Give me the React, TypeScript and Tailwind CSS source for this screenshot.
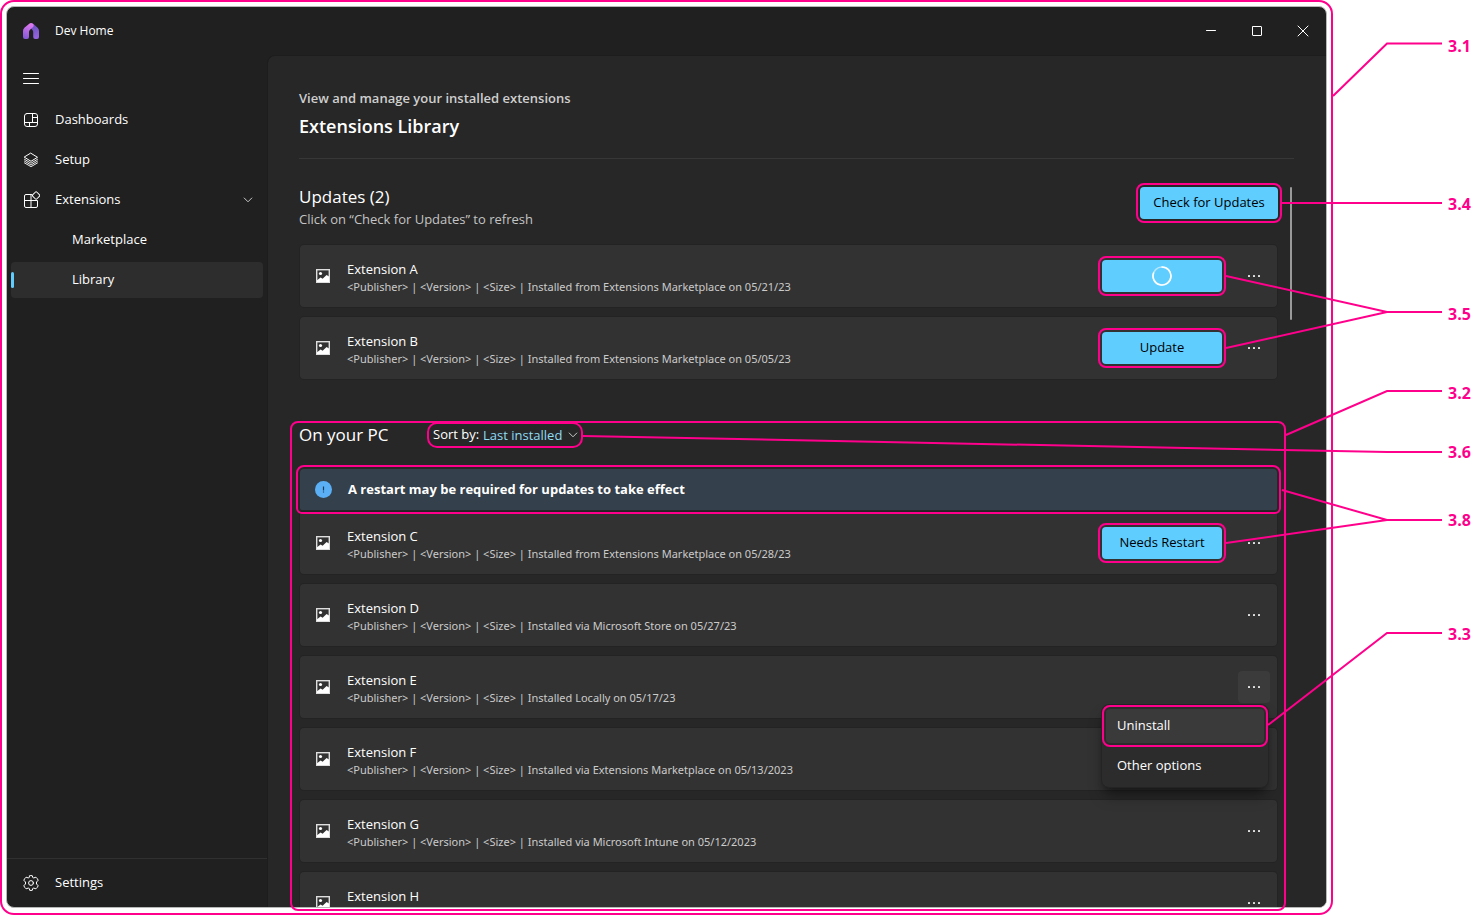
import type { ReactNode } from "react";

type Extension = {
  name: string;
  source?: string;
  action?: "loading" | "Update" | "Needs Restart";
  menuOpen?: boolean;
};

const updates: Extension[] = [
  { name: "Extension A", source: "Installed from Extensions Marketplace on 05/21/23", action: "loading" },
  { name: "Extension B", source: "Installed from Extensions Marketplace on 05/05/23", action: "Update" },
];

const restartPending: Extension = {
  name: "Extension C",
  source: "Installed from Extensions Marketplace on 05/28/23",
  action: "Needs Restart",
};

const installed: Extension[] = [
  { name: "Extension D", source: "Installed via Microsoft Store on 05/27/23" },
  { name: "Extension E", source: "Installed Locally on 05/17/23", menuOpen: true },
  { name: "Extension F", source: "Installed via Extensions Marketplace on 05/13/2023" },
  { name: "Extension G", source: "Installed via Microsoft Intune on 05/12/2023" },
  { name: "Extension H" },
];

function Logo() {
  return (
    <svg width="16" height="16" viewBox="0 0 16 16" aria-hidden="true">
      <defs>
        <linearGradient id="logoLeft" x1="0.6" y1="0" x2="0.3" y2="1">
          <stop offset="0" stopColor="#e27af0" />
          <stop offset="1" stopColor="#8458d6" />
        </linearGradient>
        <linearGradient id="logoRight" x1="0" y1="0" x2="0.4" y2="1">
          <stop offset="0" stopColor="#5b4bb0" />
          <stop offset="1" stopColor="#9263dc" />
        </linearGradient>
      </defs>
      <path d="M8 0.4 Q9.4 -0.2 10.8 1.2 L14.6 4.8 Q16 6.2 16 8 V14 Q16 16 14 16 H12.2 Q10.2 16 10.2 14 V9 Q10.2 7.8 9.4 7 L6 3 Z" fill="url(#logoRight)" />
      <path d="M6.2 0.7 Q8 -0.6 9.8 0.7 Q11.6 2.4 9.8 4.2 L6.8 7 Q6 7.8 6 9 V14 Q6 16 4 16 H2 Q0 16 0 14 V8 Q0 6.2 1.4 4.8 Z" fill="url(#logoLeft)" />
    </svg>
  );
}

function Icon({ size = 16, children }: { size?: number; children: ReactNode }) {
  return (
    <svg
      width={size}
      height={size}
      viewBox={`0 0 ${size} ${size}`}
      fill="none"
      stroke="currentColor"
      strokeWidth="1"
      strokeLinejoin="round"
      strokeLinecap="round"
      className="shrink-0"
      aria-hidden="true"
    >
      {children}
    </svg>
  );
}

const DashboardIcon = () => (
  <Icon>
    <rect x="1.5" y="1.5" width="13" height="13" rx="2.5" />
    <path d="M9.5 1.5V10.5M1.5 10.5H14.5M9.5 5.5H14.5M6.5 10.5V14.5" />
  </Icon>
);

const SetupIcon = () => (
  <Icon>
    <path d="M8 1.3 14.5 5.3 8 9.3 1.5 5.3Z" />
    <path d="M1.5 7.3 8 11.2 14.5 7.3M1.5 9.1 8 13 14.5 9.1M1.5 10.9 8 14.7 14.5 10.9" strokeWidth="0.9" />
  </Icon>
);

const ExtensionsIcon = () => (
  <Icon size={18}>
    <path d="M9.500 3.500H4A1.500 1.500 0 0 0 2.500 5V15A1.500 1.500 0 0 0 4 16.500H14A1.500 1.500 0 0 0 15.500 15V9.500H2.500M9 3.500V16.500" />
    <rect x="11.200" y="1.600" width="5.800" height="5.800" rx="1.200" transform="rotate(45 14.100 4.500)" />
  </Icon>
);

const SettingsIcon = () => (
  <Icon>
    <circle cx="8" cy="8" r="2.400" />
    <path d="M6.700 0.700Q8 0.400 9.300 0.700L9.700 2.400Q10 3.100 10.800 2.900L12.900 2.200Q14.400 3.400 15.200 5.200L13.700 6.900Q13 8 13.700 9.100L15.200 10.800Q14.400 12.600 12.900 13.800L10.800 13.100Q10 12.900 9.700 13.600L9.300 15.300Q8 15.600 6.700 15.300L6.300 13.600Q6 12.900 5.200 13.100L3.100 13.800Q1.600 12.600 0.800 10.800L2.300 9.100Q3 8 2.300 6.900L0.800 5.200Q1.600 3.400 3.100 2.200L5.200 2.900Q6 3.100 6.300 2.400Z" />
  </Icon>
);

const Chevron = () => (
  <svg width="10" height="10" viewBox="0 0 10 10" fill="none" stroke="#c8c8c8" strokeLinecap="round" strokeLinejoin="round" className="shrink-0" aria-hidden="true">
    <path d="M1.200 3 5 6.800 8.800 3" />
  </svg>
);

const PictureIcon = () => (
  <svg width="14" height="14" viewBox="0 0 14 14" className="shrink-0" aria-hidden="true">
    <rect x="0.700" y="0.700" width="12.600" height="12.600" fill="none" stroke="#dedede" strokeWidth="1.400" />
    <circle cx="4.500" cy="4.500" r="1.600" fill="#fff" />
    <path d="M1 13V11.200L4.600 8.600 6.600 9.800 10.600 6 13 7.600V13Z" fill="#fff" />
  </svg>
);

const Dots = () => (
  <svg width="14" height="4" viewBox="0 0 14 4" fill="#e4e4e4" aria-hidden="true">
    <rect x="1" y="1" width="2" height="2" rx="0.500" />
    <rect x="6" y="1" width="2" height="2" rx="0.500" />
    <rect x="11" y="1" width="2" height="2" rx="0.500" />
  </svg>
);

const Spinner = () => (
  <svg width="20" height="20" viewBox="0 0 20 20" fill="none" strokeWidth="1.600" role="img" aria-label="Updating">
    <circle cx="10" cy="10" r="9" stroke="#b4e6ff" />
    <path d="M10 1A9 9 0 1 1 1.500 7" stroke="#fff" strokeLinecap="round" />
  </svg>
);

function NavItem({ label, icon, child, selected, chevron }: { label: string; icon?: ReactNode; child?: boolean; selected?: boolean; chevron?: boolean }) {
  return (
    <a
      href="#"
      aria-current={selected ? "page" : undefined}
      className={`relative flex h-9 items-center rounded pl-3 pr-2.5 ${selected ? "bg-[#2d2d2d]" : ""}`}
    >
      {selected && <span className="absolute left-0 top-2.5 h-4 w-[3px] rounded-full bg-[#60cdff]" />}
      {icon && <span className="flex w-4 justify-center">{icon}</span>}
      <span className={child ? "pl-[49px]" : "pl-4"}>{label}</span>
      {chevron && (
        <span className="ml-auto">
          <Chevron />
        </span>
      )}
    </a>
  );
}

const accentButton = "h-8 rounded bg-[#60cdff] text-black outline-2 outline-offset-2 outline-[#ff008c]";

function ExtensionCard({ item, joined }: { item: Extension; joined?: boolean }) {
  return (
    <li className={`relative flex h-[62px] items-center bg-[#323232] pl-4 pr-[7px] ring-1 ring-black/10 ${joined ? "rounded-b" : "rounded"}`}>
      <PictureIcon />
      <div className="min-w-0 flex-1 pl-[17px] pt-0.5">
        <h3 className="leading-5 text-white">{item.name}</h3>
        <p className="min-h-4 truncate font-['Noto_Sans',sans-serif] text-[11px] leading-4 text-[#cbcbcb]">
          {item.source && `<Publisher> | <Version> | <Size> | ${item.source}`}
        </p>
      </div>
      {item.action && (
        <button type="button" className={`${accentButton} mr-4 flex w-[120px] items-center justify-center`}>
          {item.action === "loading" ? <Spinner /> : item.action}
        </button>
      )}
      <button
        type="button"
        aria-label={`More options for ${item.name}`}
        className={`flex size-8 items-center justify-center rounded ${item.menuOpen ? "bg-[#3b3b3b]" : ""}`}
      >
        <Dots />
      </button>
      {item.menuOpen && (
        <div role="menu" className="absolute right-2 top-12 z-10 flex w-[168px] flex-col gap-1.5 rounded-lg border border-[#242424] bg-[#2c2c2c] p-1 shadow-lg shadow-black/40">
          <button type="button" role="menuitem" className="h-[34px] rounded bg-[#3a3a3a] px-[11px] text-left outline-2 outline-offset-2 outline-[#ff008c]">
            Uninstall
          </button>
          <button type="button" role="menuitem" className="h-[34px] rounded px-[11px] text-left">
            Other options
          </button>
        </div>
      )}
    </li>
  );
}

function Callouts() {
  const label = "absolute right-0 w-[23px] text-base leading-5 font-bold text-[#ff008c]";
  return (
    <>
      <svg width="888" height="915" viewBox="583 0 888 915" fill="none" stroke="#ff008c" strokeWidth="2" className="pointer-events-none absolute right-0 top-0 z-20" aria-hidden="true">
        <path d="M1333 96 1387 43.500H1442" />
        <path d="M1282 203H1442" />
        <path d="M1226 276 1387 312H1442M1226 348 1387 312" />
        <path d="M1286 435 1387 391H1442" />
        <path d="M583 436 1387 452H1442" />
        <path d="M1282 490 1387 520H1442M1226 543 1387 520" />
        <path d="M1268 725 1387 633H1442" />
      </svg>
      <span className={`${label} top-9`}>3.1</span>
      <span className={`${label} top-[194px]`}>3.4</span>
      <span className={`${label} top-[304px]`}>3.5</span>
      <span className={`${label} top-[383px]`}>3.2</span>
      <span className={`${label} top-[442px]`}>3.6</span>
      <span className={`${label} top-[510px]`}>3.8</span>
      <span className={`${label} top-[624px]`}>3.3</span>
    </>
  );
}

export default function App() {
  return (
    <div className="relative flex h-screen overflow-hidden bg-white pr-[138px] font-['Open_Sans','Noto_Sans',sans-serif] text-[13px] text-white">
      <div className="relative flex min-w-0 flex-1 flex-col rounded-[14px] border-2 border-[#ff008c] px-1 pb-[5px] pt-1">
        <div className="flex min-h-0 flex-1 flex-col overflow-hidden rounded-lg border border-[#b5b8b6] bg-[#202020]">
          <header className="flex h-12 shrink-0 items-center pl-4 pr-[17px]">
            <Logo />
            <h1 className="pl-4 text-xs">Dev Home</h1>
            <div className="ml-auto flex gap-[34px]">
              <button type="button" aria-label="Minimize" className="size-3">
                <Icon size={12}>
                  <path d="M1.500 5.500H10.500" />
                </Icon>
              </button>
              <button type="button" aria-label="Maximize" className="size-3">
                <Icon size={12}>
                  <rect x="1.500" y="1.500" width="9" height="9" rx="0.500" />
                </Icon>
              </button>
              <button type="button" aria-label="Close" className="size-3">
                <Icon size={12}>
                  <path d="M1 1 11 11M11 1 1 11" />
                </Icon>
              </button>
            </div>
          </header>

          <div className="flex min-h-0 flex-1">
            <aside className="flex w-[260px] shrink-0 flex-col">
              <button type="button" aria-label="Toggle navigation" className="mx-1 mt-1.5 flex h-9 items-center px-3">
                <Icon>
                  <path d="M0.500 2.500H15.500M0.500 7.500H15.500M0.500 12.500H15.500" />
                </Icon>
              </button>
              <nav className="flex flex-col gap-1 px-1 pt-[5px]">
                <NavItem label="Dashboards" icon={<DashboardIcon />} />
                <NavItem label="Setup" icon={<SetupIcon />} />
                <NavItem label="Extensions" icon={<ExtensionsIcon />} chevron />
                <NavItem label="Marketplace" child />
                <NavItem label="Library" child selected />
              </nav>
              <div className="mt-auto border-t border-[#303030] px-1 py-1.5">
                <NavItem label="Settings" icon={<SettingsIcon />} />
              </div>
            </aside>

            <main className="relative min-w-0 flex-1 overflow-hidden rounded-tl-lg border-l border-t border-[#1d1d1d] bg-[#272727] pl-[31px] pr-12">
              <div className="-mr-4 border-b border-[#373737] pb-[18px] pt-8">
                <p className="leading-5 font-semibold text-[#cfcfcf]">View and manage your installed extensions</p>
                <h2 className="pt-1 text-lg leading-7 font-semibold">Extensions Library</h2>
              </div>
              <div className="absolute right-[34px] top-[131px] h-[133px] w-0.5 rounded-full bg-[#9a9a9a]" />

              <section>
                <div className="flex items-start justify-between pt-[26px]">
                  <div>
                    <h2 className="text-[17px] leading-6">Updates (2)</h2>
                    <p className="leading-5 text-[#c4c4c4]">Click on “Check for Updates” to refresh</p>
                  </div>
                  <button type="button" className={`${accentButton} mt-0.5 w-[138px]`}>
                    Check for Updates
                  </button>
                </div>
                <ul className="mx-px flex flex-col gap-2.5 pt-4">
                  {updates.map((item) => (
                    <ExtensionCard key={item.name} item={item} />
                  ))}
                </ul>
              </section>

              <section className="pt-11">
                <div className="flex items-center">
                  <h2 className="w-[132px] text-[17px] leading-6">On your PC</h2>
                  <div className="flex h-[18px] items-center rounded-md outline-2 outline-offset-2 outline-[#ff008c]">
                    <label htmlFor="sort" className="w-[52px] whitespace-nowrap pl-0.5">
                      Sort by:
                    </label>
                    <select id="sort" className="w-[82px] appearance-none bg-transparent leading-[18px] text-[#8fdcf5]">
                      <option>Last installed</option>
                      <option>Name</option>
                    </select>
                    <span className="pl-[3px] pr-px">
                      <Chevron />
                    </span>
                  </div>
                </div>
                <div role="status" className="relative z-10 mx-px mt-[22px] flex h-[41px] items-center rounded-t rounded-b-xs bg-[#34404b] pl-[15px] font-bold outline-2 outline-offset-2 outline-[#ff008c]">
                  <svg width="17" height="17" viewBox="0 0 17 17" className="shrink-0" aria-hidden="true">
                    <circle cx="8.500" cy="8.500" r="8.500" fill="#5bb0f5" />
                    <path d="M8.500 5.500V9.500M8.500 10.500V11.500" stroke="#1d3b57" strokeWidth="1.200" />
                  </svg>
                  <span className="pl-4">A restart may be required for updates to take effect</span>
                </div>
                <ul className="mx-px flex flex-col gap-2.5 pt-0.5">
                  <ExtensionCard item={restartPending} joined />
                  {installed.map((item) => (
                    <ExtensionCard key={item.name} item={item} />
                  ))}
                </ul>
              </section>
            </main>
          </div>
        </div>
        <div className="pointer-events-none absolute bottom-0.5 left-72 right-[45px] top-[419px] rounded-lg border-2 border-[#ff008c]" />
      </div>
      <Callouts />
    </div>
  );
}
